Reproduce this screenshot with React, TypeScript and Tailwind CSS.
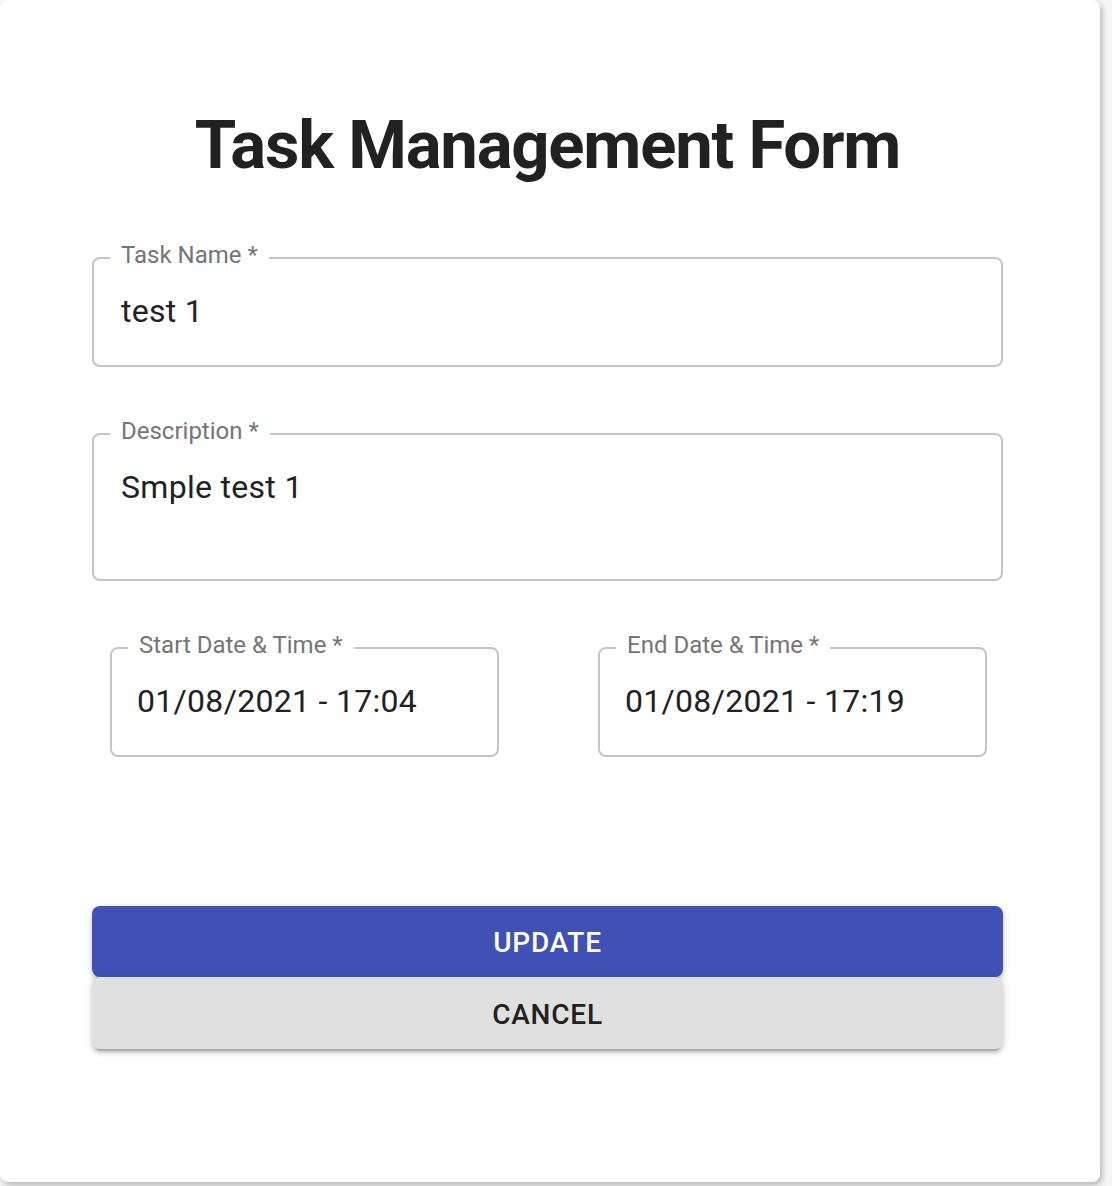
import React from "react";

function Field({
  label,
  value,
  className,
  contentClass,
}: {
  label: string;
  value: string;
  className: string;
  contentClass: string;
}) {
  return (
    <fieldset
      className={`border-2 border-[#c4c4c4] rounded-[8px] pl-[16px] pr-[16px] min-w-0 ${className}`}
    >
      <legend className="px-[11px] pb-[6px] text-[24px] leading-[24px] text-[#757575] whitespace-nowrap">
        {label}
      </legend>
      <div className={`pt-[22px] ${contentClass}`}>
        <div className="text-[32px] leading-[32px] tracking-[0.3px] text-[#212121]">{value}</div>
      </div>
    </fieldset>
  );
}

export default function App() {
  return (
    <div
      className="w-[1112px] h-[1186px] bg-[#f6f6f6] overflow-hidden"
      style={{ fontFamily: "Roboto, 'Liberation Sans', sans-serif" }}
    >
      <div className="w-[1100px] h-[1182px] bg-white rounded-[8px] shadow-[2px_3px_6px_rgba(0,0,0,0.28)] pt-[103px] pl-[92px] pr-[97px]">
        <h1 className="text-center text-[67px] leading-[84px] font-bold tracking-[-1.2px] text-[#212121]">
          Task Management Form
        </h1>
        <Field
          label="Task Name *"
          value="test 1"
          className="mt-[56px]"
          contentClass="pl-[11px] h-[92px]"
        />
        <Field
          label="Description *"
          value="Smple test 1"
          className="mt-[52px]"
          contentClass="pl-[11px] h-[130px]"
        />
        <div className="flex mt-[52px] pl-[18px] gap-[99px]">
          <Field
            label="Start Date & Time *"
            value="01/08/2021 - 17:04"
            className="w-[389px]"
            contentClass="pl-[9px] h-[92px]"
          />
          <Field
            label="End Date & Time *"
            value="01/08/2021 - 17:19"
            className="w-[389px]"
            contentClass="pl-[9px] h-[92px]"
          />
        </div>
        <div className="mt-[149px] flex flex-col">
          <button className="h-[71px] w-full pt-[2px] rounded-[8px] bg-[#3f51b5] text-white text-[28px] font-medium tracking-[0.8px] uppercase shadow-[0_6px_2px_-4px_rgba(0,0,0,0.2),0_4px_4px_0_rgba(0,0,0,0.14),0_2px_10px_0_rgba(0,0,0,0.12)]">
            Update
          </button>
          <button className="relative h-[72px] w-full pt-[4px] rounded-[8px] bg-[#e0e0e0] text-[#212121] text-[28px] font-medium tracking-[0.8px] uppercase shadow-[0_6px_2px_-4px_rgba(0,0,0,0.2),0_4px_4px_0_rgba(0,0,0,0.14),0_2px_10px_0_rgba(0,0,0,0.12)]">
            Cancel
          </button>
        </div>
      </div>
    </div>
  );
}
